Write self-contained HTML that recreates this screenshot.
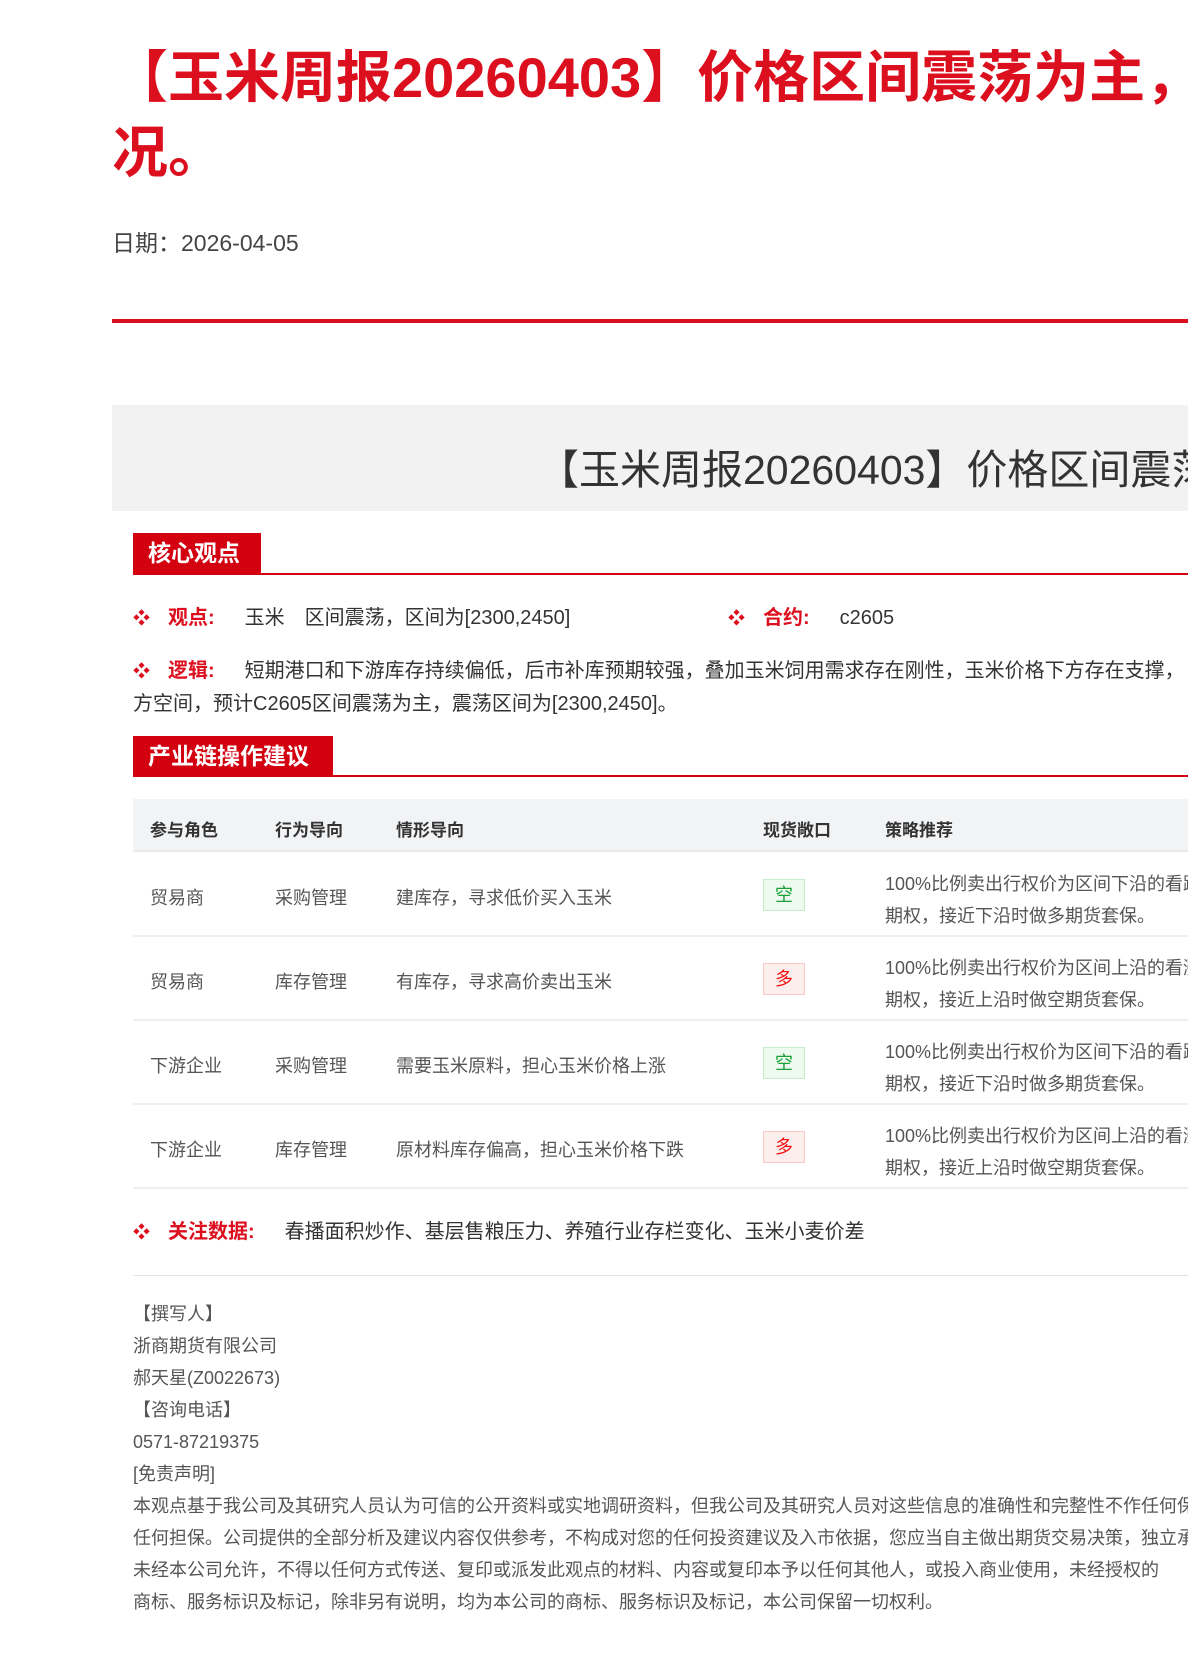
<!DOCTYPE html>
<html><head><meta charset="utf-8"><style>
*{margin:0;padding:0;box-sizing:border-box}
html,body{width:1188px;height:1680px;overflow:hidden;background:#fff}
body{font-family:"Liberation Sans","Noto Sans CJK SC",sans-serif;position:relative;color:#333}
#wrap{position:absolute;left:0;top:0;width:1188px;height:1680px;overflow:hidden}
.abs{position:absolute;white-space:nowrap}
.title{left:112px;top:40px;font-size:56px;font-weight:bold;color:#dc0f1e;line-height:75px}
.date{left:112px;top:224px;font-size:23px;color:#444}
.rl{left:112px;right:0;top:319px;height:4px;background:#dc0f1e}
.box{left:112px;right:0;top:405px;height:106px;background:#f2f2f2}
.boxt{left:538px;top:436px;font-size:41px;color:#333}
.sh{background:#d3000f;color:#fff;font-weight:bold;font-size:23px;padding-left:15px;line-height:40px;height:41px}
.sl{left:133px;right:0;height:2px;background:#d3000f}
.b{font-size:20px;color:#333}
.b i{font-style:normal;color:#dc0f1e;font-size:17px;margin-right:18px}
.b em{font-style:normal;color:#dc0f1e;font-weight:bold;margin-right:30px}
.th{left:133px;right:0;top:799px;height:53px;background:#f2f3f5;border-bottom:2px solid #e8eaee}
.c{font-size:18px;color:#555}
.hd{font-size:17px;font-weight:bold;color:#333}
.row{left:133px;right:0;height:2px;background:#eef0f3}
.tag{width:42px;height:32px;border:1px solid;font-size:18px;text-align:center;line-height:30px}
.g{color:#18a03a;background:#eefaf0;border-color:#c6ebcd}
.r{color:#e11;background:#fdeeee;border-color:#f6c9c9}
.f{left:133px;font-size:18px;color:#555;line-height:32px}
</style></head><body><div id="wrap">
<div class="abs title">【玉米周报20260403】价格区间震荡为主，关注天气炒作情<br>况。</div>
<div class="abs date">日期：2026-04-05</div>
<div class="abs rl"></div>
<div class="abs box"></div>
<div class="abs boxt">【玉米周报20260403】价格区间震荡为主</div>

<div class="abs sh" style="left:133px;top:533px;width:128px">核心观点</div>
<div class="abs sl" style="top:573px"></div>
<div class="abs b" style="left:133px;top:601px"><i>❖</i><em>观点:</em>玉米　区间震荡，区间为[2300,2450]</div>
<div class="abs b" style="left:728px;top:601px"><i>❖</i><em>合约:</em>c2605</div>
<div class="abs b" style="left:133px;top:654px"><i>❖</i><em>逻辑:</em>短期港口和下游库存持续偏低，后市补库预期较强，叠加玉米饲用需求存在刚性，玉米价格下方存在支撑，</div>
<div class="abs b" style="left:133px;top:687px">方空间，预计C2605区间震荡为主，震荡区间为[2300,2450]。</div>

<div class="abs sh" style="left:133px;top:736px;width:200px">产业链操作建议</div>
<div class="abs sl" style="top:775px"></div>

<div class="abs th"></div>
<div class="abs hd" style="left:150px;top:816px">参与角色</div>
<div class="abs hd" style="left:275px;top:816px">行为导向</div>
<div class="abs hd" style="left:396px;top:816px">情形导向</div>
<div class="abs hd" style="left:763px;top:816px">现货敞口</div>
<div class="abs hd" style="left:885px;top:816px">策略推荐</div>

<div class="abs c" style="left:150px;top:884px">贸易商</div>
<div class="abs c" style="left:275px;top:884px">采购管理</div>
<div class="abs c" style="left:396px;top:884px">建库存，寻求低价买入玉米</div>
<div class="abs tag g" style="left:763px;top:879px">空</div>
<div class="abs c" style="left:885px;top:868px;line-height:32px">100%比例卖出行权价为区间下沿的看跌<br>期权，接近下沿时做多期货套保。</div>
<div class="abs row" style="top:935px"></div>

<div class="abs c" style="left:150px;top:968px">贸易商</div>
<div class="abs c" style="left:275px;top:968px">库存管理</div>
<div class="abs c" style="left:396px;top:968px">有库存，寻求高价卖出玉米</div>
<div class="abs tag r" style="left:763px;top:963px">多</div>
<div class="abs c" style="left:885px;top:952px;line-height:32px">100%比例卖出行权价为区间上沿的看涨<br>期权，接近上沿时做空期货套保。</div>
<div class="abs row" style="top:1019px"></div>

<div class="abs c" style="left:150px;top:1052px">下游企业</div>
<div class="abs c" style="left:275px;top:1052px">采购管理</div>
<div class="abs c" style="left:396px;top:1052px">需要玉米原料，担心玉米价格上涨</div>
<div class="abs tag g" style="left:763px;top:1047px">空</div>
<div class="abs c" style="left:885px;top:1036px;line-height:32px">100%比例卖出行权价为区间下沿的看跌<br>期权，接近下沿时做多期货套保。</div>
<div class="abs row" style="top:1103px"></div>

<div class="abs c" style="left:150px;top:1136px">下游企业</div>
<div class="abs c" style="left:275px;top:1136px">库存管理</div>
<div class="abs c" style="left:396px;top:1136px">原材料库存偏高，担心玉米价格下跌</div>
<div class="abs tag r" style="left:763px;top:1131px">多</div>
<div class="abs c" style="left:885px;top:1120px;line-height:32px">100%比例卖出行权价为区间上沿的看涨<br>期权，接近上沿时做空期货套保。</div>
<div class="abs row" style="top:1187px"></div>

<div class="abs b" style="left:133px;top:1215px"><i>❖</i><em>关注数据:</em>春播面积炒作、基层售粮压力、养殖行业存栏变化、玉米小麦价差</div>
<div class="abs" style="left:133px;right:0;top:1275px;height:1px;background:#e4e4e4"></div>

<div class="abs f" style="top:1298px">【撰写人】<br>浙商期货有限公司<br>郝天星(Z0022673)<br>【咨询电话】<br>0571-87219375<br>[免责声明]<br>本观点基于我公司及其研究人员认为可信的公开资料或实地调研资料，但我公司及其研究人员对这些信息的准确性和完整性不作任何保证<br>任何担保。公司提供的全部分析及建议内容仅供参考，不构成对您的任何投资建议及入市依据，您应当自主做出期货交易决策，独立承担风险<br>未经本公司允许，不得以任何方式传送、复印或派发此观点的材料、内容或复印本予以任何其他人，或投入商业使用，未经授权的<br>商标、服务标识及标记，除非另有说明，均为本公司的商标、服务标识及标记，本公司保留一切权利。</div>
</div></body></html>
